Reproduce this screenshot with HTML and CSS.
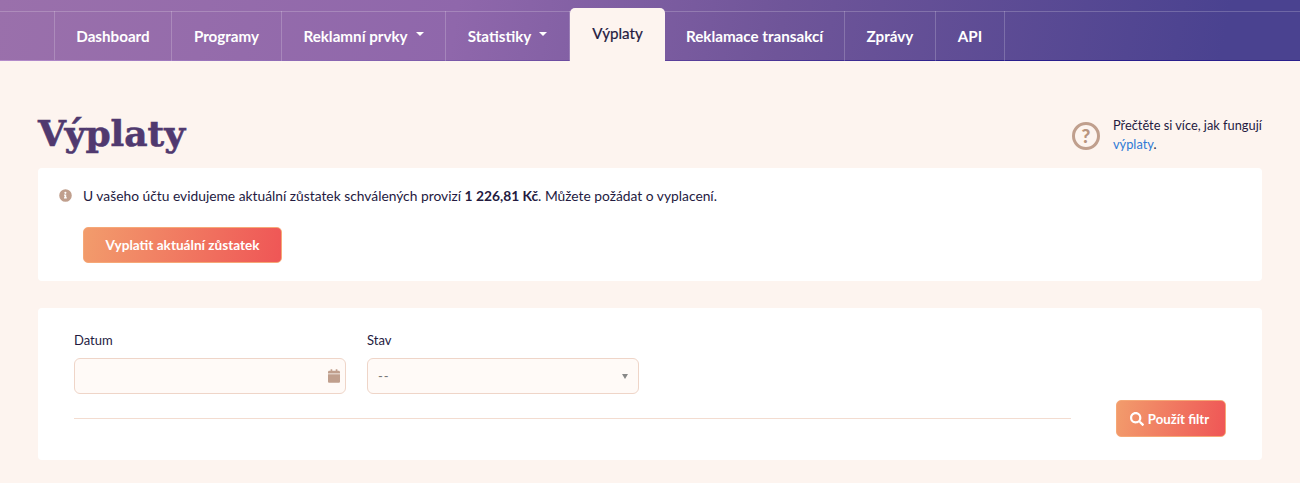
FILE: index.html
```html
<!DOCTYPE html>
<html lang="cs">
<head>
    <meta charset="UTF-8">
    <meta name="viewport" content="width=device-width, initial-scale=1.0">
    <title>Výplaty</title>
    <link rel="stylesheet" href="styles.css">
</head>
<body>
    <!-- Hlavni menu -->
    <nav class="topbar">
        <ul class="menu">
            <li class="menu-item"><a href="#">Dashboard</a></li>
            <li class="menu-item"><a href="#">Programy</a></li>
            <li class="menu-item"><a href="#" class="has-caret">Reklamní prvky</a></li>
            <li class="menu-item"><a href="#" class="has-caret">Statistiky</a></li>
            <li class="menu-item active"><a href="#">Výplaty</a></li>
            <li class="menu-item"><a href="#">Reklamace transakcí</a></li>
            <li class="menu-item"><a href="#">Zprávy</a></li>
            <li class="menu-item"><a href="#">API</a></li>
        </ul>
    </nav>

    <main class="content">
        <div class="page-head">
            <h1>Výplaty</h1>
            <div class="help">
                <span class="help-icon">?</span>
                <p>Přečtěte si více, jak fungují<br><a href="#">výplaty</a>.</p>
            </div>
        </div>

        <!-- Zustatek -->
        <section class="panel balance">
            <p class="balance-text">
                <svg class="info-icon" viewBox="0 0 512 512" width="13" height="13"><path d="M256 8a248 248 0 1 0 0 496 248 248 0 0 0 0-496zm-4 100a42 42 0 1 1 0 84 42 42 0 0 1 0-84zm56 254c0 7-5 12-12 12h-88c-7 0-12-5-12-12v-24c0-7 5-12 12-12h12v-64h-12c-7 0-12-5-12-12v-24c0-7 5-12 12-12h64c7 0 12 5 12 12v100h12c7 0 12 5 12 12z"/></svg>
                <span>U vašeho účtu evidujeme aktuální zůstatek schválených provizí <strong>1 226,81 Kč</strong>. Můžete požádat o vyplacení.</span>
            </p>
            <button class="btn btn-payout">Vyplatit aktuální zůstatek</button>
        </section>

        <!-- Filtr -->
        <section class="panel filter">
            <div class="filter-main">
                <div class="fields">
                    <div class="field">
                        <label>Datum</label>
                        <div class="input">
                            <svg class="calendar-icon" viewBox="0 0 448 512" width="12" height="14"><path d="M0 464c0 26 22 48 48 48h352c26 0 48-22 48-48V192H0v272zM400 64h-48V16c0-9-7-16-16-16h-32c-9 0-16 7-16 16v48H160V16c0-9-7-16-16-16h-32c-9 0-16 7-16 16v48H48C22 64 0 86 0 112v48h448v-48c0-26-22-48-48-48z"/></svg>
                        </div>
                    </div>
                    <div class="field">
                        <label>Stav</label>
                        <div class="input select">
                            <span>--</span>
                            <i class="select-arrow"></i>
                        </div>
                    </div>
                </div>
                <hr class="divider">
            </div>
            <button class="btn btn-filter">
                <svg viewBox="0 0 512 512" width="14" height="14"><path fill="#fff" d="M505 443 405 343c-4-4-10-7-17-7h-16c28-35 44-80 44-128C416 93 323 0 208 0S0 93 0 208s93 208 208 208c48 0 93-16 128-44v16c0 7 3 13 7 17l100 100c9 9 24 9 34 0l28-28c9-10 9-25 0-34zM208 336a128 128 0 1 1 0-256 128 128 0 0 1 0 256z"/></svg>
                Použít filtr
            </button>
        </section>
    </main>
</body>
</html>
```

FILE: styles.css
```css
* {
    box-sizing: border-box;
}

body {
    margin: 0;
    background-color: #fdf4ef;
    color: #241a3f;
    font-family: 'Lato', 'Noto Sans', sans-serif;
    font-size: 14px;
}

/* Menu */
.topbar {
    height: 61px;
    padding: 11px 0 0 54px;
    background-image: linear-gradient(100deg, #9a70ab 0%, #8f67ab 35%, #6f5599 60%, #4a4290 94%);
    border-bottom: 1px solid #3f2f8c;
    border-image: linear-gradient(to right, #b58ccb 0%, #6a4a9f 45%, #2a1f8c 75%) 1;
    position: relative;
}

.topbar::before {
    content: "";
    position: absolute;
    left: 0;
    right: 0;
    top: 11px;
    height: 1px;
    background-color: rgba(255, 255, 255, 0.2);
}

.menu {
    display: grid;
    grid-template-columns: 117px 110px 164px 124px 95px 180px 91px 69px;
    height: 49px;
    margin: 0;
    padding: 0;
    list-style: none;
    border-left: 1px solid rgba(255, 255, 255, 0.2);
    width: fit-content;
}

.menu-item {
    border-right: 1px solid rgba(255, 255, 255, 0.2);
}

.menu-item a {
    display: flex;
    align-items: center;
    justify-content: center;
    height: 100%;
    padding-bottom: 1px;
    color: #fff;
    font-size: 15.2px;
    font-weight: 700;
    text-decoration: none;
}

.has-caret::after {
    content: "";
    margin-left: 8px;
    margin-top: -3px;
    border-top: 4px solid #fff;
    border-left: 4px solid transparent;
    border-right: 4px solid transparent;
}

.menu-item.active {
    height: 53px;
    margin-top: -3px;
    background-color: #fdf4ef;
    border-right: 0;
    border-radius: 5px 5px 0 0;
    position: relative;
    z-index: 1;
}

.menu-item.active a {
    padding-bottom: 3px;
    color: #241a3f;
    font-weight: 400;
    -webkit-text-stroke: 0.2px #241a3f;
}

/* Zahlavi stranky */
.content {
    padding: 0 38px;
}

.page-head {
    display: flex;
    justify-content: space-between;
    align-items: flex-start;
    height: 107px;
    padding-top: 46px;
}

h1 {
    margin: 0;
    color: #50396f;
    font-family: 'DejaVu Serif', serif;
    font-size: 36px;
    line-height: 52px;
    font-weight: 700;
    -webkit-text-stroke: 0.6px #50396f;
}

.help {
    display: flex;
    align-items: center;
    gap: 13px;
    width: 190px;
    margin-top: 9px;
}

.help-icon {
    flex: none;
    width: 28px;
    height: 28px;
    margin-top: 2px;
    border: 3px solid #c09f8d;
    border-radius: 50%;
    color: #b8947f;
    font-size: 19px;
    font-weight: 900;
    line-height: 22px;
    text-align: center;
}

.help p {
    margin: 0;
    font-size: 12.8px;
    line-height: 19px;
    white-space: nowrap;
}

.help a {
    color: #2e7ad6;
    text-decoration: none;
}

/* Panely */
.panel {
    background-color: #fff;
    border-radius: 4px;
}

.balance {
    height: 113px;
    padding: 20px 21px 0;
}

.balance-text {
    display: flex;
    align-items: center;
    gap: 11px;
    margin: 0 0 23px;
    line-height: 16px;
    font-size: 13.8px;
}

.info-icon {
    margin-top: -2px;
    fill: #c09f8d;
}

.btn {
    border: 1px solid #f6a877;
    border-radius: 5px;
    background-image: linear-gradient(100deg, #f29c6c 0%, #ef5656 100%);
    color: #fff;
    font-family: inherit;
    font-size: 13.4px;
    font-weight: 700;
}

.btn-payout {
    width: 199px;
    height: 36px;
    margin-left: 24px;
    font-size: 13.6px;
}

.filter {
    display: flex;
    align-items: flex-end;
    justify-content: space-between;
    height: 152px;
    margin-top: 27px;
    padding: 0 36px 23px;
}

.filter-main {
    width: 997px;
    margin-bottom: 18px;
}

.fields {
    display: flex;
    gap: 21px;
}

.field {
    width: 272px;
}

.field label {
    display: block;
    margin-bottom: 10px;
    font-size: 13px;
    line-height: 16px;
}

.input {
    display: flex;
    align-items: center;
    justify-content: flex-end;
    height: 36px;
    padding: 0 5px;
    background-color: #fffaf7;
    border: 1.5px solid #efd5c8;
    border-radius: 6px;
}

.calendar-icon {
    fill: #c09f8d;
}

.select {
    justify-content: space-between;
    margin-top: 1px;
    padding: 0 10px;
    color: #777;
    font-size: 13px;
    letter-spacing: 1px;
}

.select-arrow {
    border-top: 5px solid #888;
    border-left: 3.5px solid transparent;
    border-right: 3.5px solid transparent;
}

.divider {
    height: 1px;
    margin: 24px 0 0;
    border: 0;
    background-color: #f3dcd0;
}

.btn-filter {
    display: flex;
    align-items: center;
    justify-content: center;
    gap: 4px;
    width: 110px;
    height: 37px;
    padding-left: 3px;
    font-size: 13.2px;
}
```
